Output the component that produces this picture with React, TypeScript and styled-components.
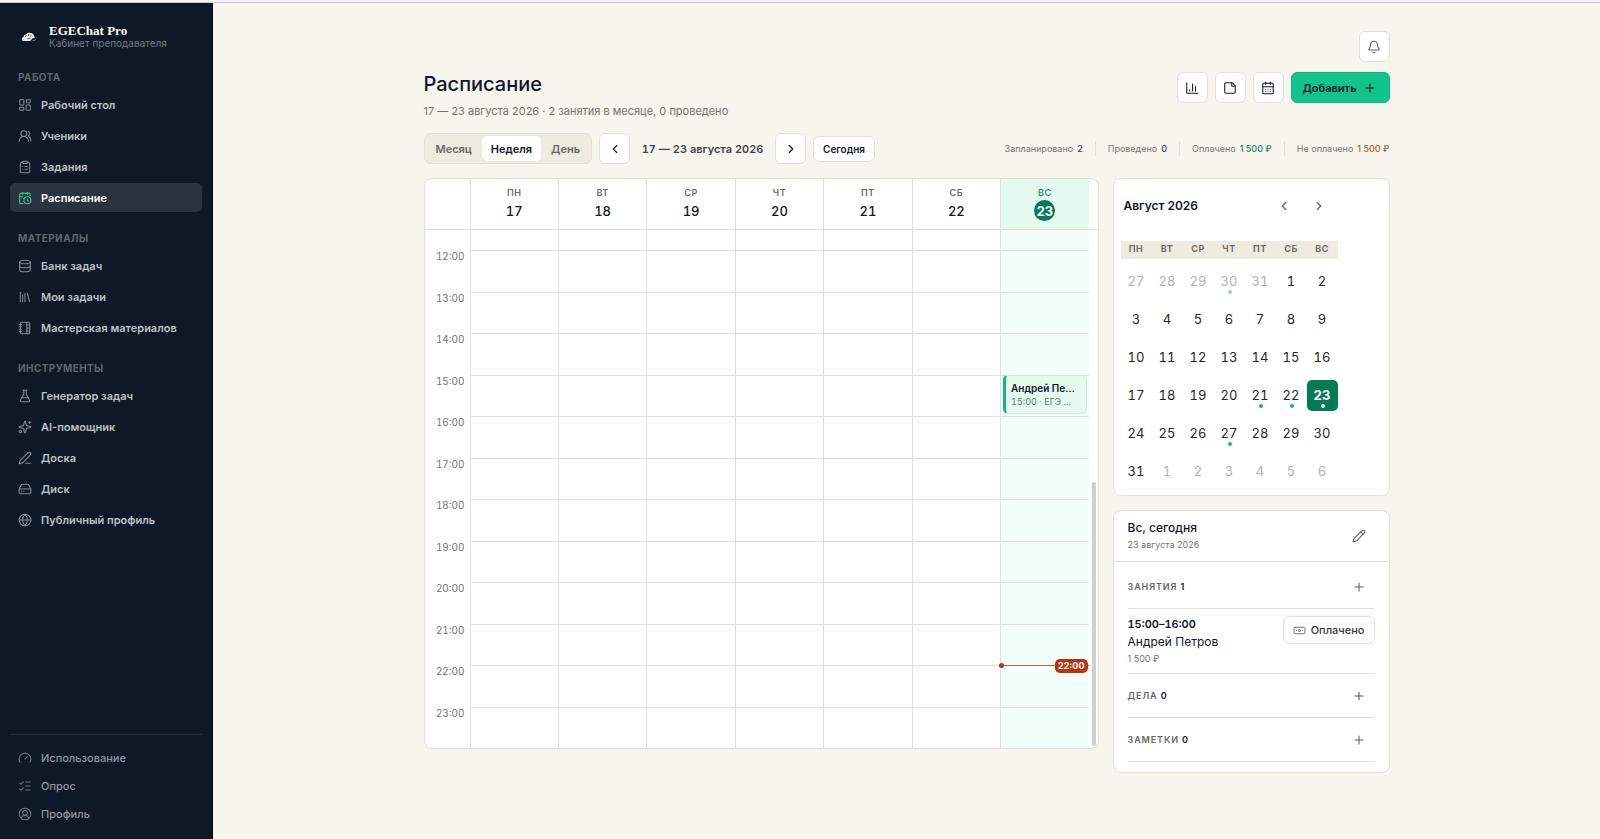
import React from "react";
import styled, { createGlobalStyle, css } from "styled-components";
import {
  Banknote,
  Bell,
  CalendarClock,
  CalendarDays,
  ChevronLeft,
  ChevronRight,
  CircleUserRound,
  ClipboardList,
  Database,
  FlaskConical,
  Gauge,
  Globe,
  HardDrive,
  LayoutDashboard,
  Library,
  ListChecks,
  NotebookTabs,
  PenLine,
  Pencil,
  Plus,
  Sparkles,
  StickyNote,
  UsersRound,
  type LucideIcon,
} from "lucide-react";

const color = {
  page: "#f6f5ee",
  card: "#ffffff",
  ink: "#10172a",
  soft: "#3f4450",
  muted: "#74746f",
  faint: "#b3b2ad",
  line: "#e2dfd8",
  sand: "#eeebe1",
  navy: "#0f1826",
  green: "#10b981",
  mint: "#10c48a",
  deep: "#047a55",
  red: "#b8330e",
};

const GlobalStyle = createGlobalStyle`
  *, *::before, *::after { box-sizing: border-box; }
  body {
    margin: 0;
    background: ${color.page};
    color: ${color.ink};
    font-family: Inter, "Liberation Sans", sans-serif;
    font-size: 11px;
    line-height: 14px;
  }
  button { font: inherit; color: inherit; cursor: pointer; }
  a { color: inherit; text-decoration: none; }
  h1, h2, h3, p, ul, dl, dd { margin: 0; padding: 0; }
  ul { list-style: none; }
  svg { display: block; flex: none; }
`;

const TopStrip = styled.div`
  height: 3px;
  background: #f5f5f7;
  border-bottom: 1px solid #cbcbcd;
`;

const Shell = styled.div`
  display: flex;
  min-height: calc(100vh - 3px);
`;

/* Sidebar */

const Sidebar = styled.aside`
  display: flex;
  flex-direction: column;
  flex: none;
  width: 213px;
  padding: 21px 10px 11px 10px;
  background: ${color.navy};
  border-right: 1px solid #000;
`;

const Brand = styled.a`
  display: flex;
  align-items: center;
  gap: 12px;
  padding-left: 11px;
  margin-bottom: 22px;
`;

const BrandName = styled.strong`
  display: block;
  font: bold 13px/13px "Liberation Serif", serif;
  color: #fff;
`;

const BrandRole = styled.span`
  display: block;
  font-size: 10px;
  line-height: 12px;
  color: #747a84;
`;

const Nav = styled.nav`
  display: flex;
  flex-direction: column;
  gap: 20px;
`;

const GroupTitle = styled.h2`
  margin-bottom: 7px;
  padding-left: 8px;
  font-size: 10px;
  font-weight: 700;
  line-height: 12px;
  letter-spacing: 0.04em;
  color: #5f6671;
`;

const NavList = styled.ul`
  display: grid;
  gap: 2px;
`;

const NavLink = styled.a<{ $active?: boolean }>`
  display: flex;
  align-items: center;
  gap: 9px;
  height: 29px;
  padding: 0 8px;
  border-radius: 5px;
  font-weight: 600;
  color: #bdc1c7;
  svg { color: #858b95; }
  ${(p) =>
    p.$active &&
    css`
      background: #2b3340;
      color: #fff;
      svg { color: #34d399; }
    `}
`;

const SidebarFooter = styled.nav`
  margin-top: auto;
  padding-top: 9px;
  border-top: 1px solid #222b38;
`;

const FooterLink = styled(NavLink)`
  height: 28px;
  font-weight: 500;
  color: #9196a0;
  svg { color: #6f7681; }
`;

/* Page */

const Main = styled.main`
  flex: 1;
  min-width: 0;
  padding: 28px 24px;
`;

const Content = styled.div`
  max-width: 966px;
  margin: 0 auto;
`;

const Row = styled.div<{ $end?: boolean }>`
  display: flex;
  align-items: center;
  gap: 7px;
  justify-content: ${(p) => (p.$end ? "flex-end" : "flex-start")};
`;

const IconButton = styled.button<{ $plain?: boolean; $muted?: boolean }>`
  display: grid;
  place-items: center;
  width: 31px;
  height: 31px;
  padding: 0;
  border: 1px solid ${(p) => (p.$plain ? "transparent" : color.line)};
  border-radius: 6px;
  background: ${(p) => (p.$plain ? "transparent" : color.card)};
  color: ${(p) => (p.$muted ? "#5d5e5d" : color.ink)};
`;

const PageHead = styled.header`
  display: flex;
  justify-content: space-between;
  align-items: flex-start;
  margin: 10px 0 15px;
`;

const Title = styled.h1`
  font-size: 20px;
  font-weight: 500;
  line-height: 24px;
`;

const Subtitle = styled.p`
  margin-top: 8px;
  color: ${color.muted};
`;

const AddButton = styled.button`
  display: flex;
  align-items: center;
  gap: 6px;
  height: 31px;
  padding: 0 12px 0 11px;
  border: 1px solid #12b47f;
  border-radius: 6px;
  background: ${color.mint};
  font-weight: 600;
`;

const Toolbar = styled.div`
  display: flex;
  align-items: center;
  justify-content: space-between;
  margin-bottom: 14px;
`;

const Segmented = styled.div`
  display: flex;
  gap: 1px;
  height: 31px;
  padding: 2px;
  border: 1px solid ${color.line};
  border-radius: 7px;
  background: ${color.sand};
`;

const Segment = styled.button<{ $on?: boolean }>`
  padding: 0 9px;
  border: 0;
  border-radius: 5px;
  background: ${(p) => (p.$on ? color.card : "transparent")};
  color: ${(p) => (p.$on ? color.ink : "#686967")};
  font-weight: 600;
`;

const RangeLabel = styled.span`
  min-width: 131px;
  text-align: center;
  font-weight: 600;
  font-variant-numeric: tabular-nums;
  color: ${color.soft};
`;

const TodayButton = styled.button`
  height: 26px;
  padding: 0 9px;
  border: 1px solid ${color.line};
  border-radius: 6px;
  background: ${color.card};
  font-size: 10px;
  font-weight: 600;
`;

const Stats = styled.dl`
  display: flex;
  font-size: 9px;
  line-height: 15px;
`;

const Stat = styled.div<{ $tone: string }>`
  display: flex;
  gap: 4px;
  padding: 0 12px;
  border-left: 1px solid ${color.line};
  color: ${color.muted};
  &:first-child { border-left: 0; }
  &:last-child { padding-right: 0; }
  dd { color: ${(p) => p.$tone}; font-weight: 500; }
`;

const Columns = styled.div`
  display: grid;
  grid-template-columns: minmax(0, 1fr) 277px;
  align-items: start;
  gap: 14px;
`;

const Card = styled.section`
  border: 1px solid ${color.line};
  border-radius: 8px;
  background: ${color.card};
  overflow: hidden;
`;

/* Week grid */

const weekColumns = css`
  display: grid;
  grid-template-columns: 45px repeat(7, minmax(0, 1fr)) 9px;
`;

const WeekHead = styled.div`
  ${weekColumns}
  border-bottom: 1px solid ${color.line};
`;

const DayHead = styled.div<{ $today?: boolean }>`
  display: flex;
  flex-direction: column;
  align-items: center;
  height: 50px;
  padding-top: 7px;
  border-left: 1px solid ${color.line};
  background: ${(p) => (p.$today ? "#e4faf0" : "transparent")};
`;

const DayName = styled.span<{ $today?: boolean }>`
  font-size: 9px;
  font-weight: 600;
  line-height: 13px;
  letter-spacing: 0.06em;
  color: ${(p) => (p.$today ? "#2f8f6c" : "#6a6b6c")};
`;

const DayNumber = styled.span<{ $today?: boolean }>`
  display: grid;
  place-items: center;
  width: 21px;
  height: 21px;
  margin-top: 1px;
  border-radius: 50%;
  font-size: 13px;
  font-weight: 500;
  font-variant-numeric: tabular-nums;
  ${(p) => p.$today && css`background: ${color.deep}; color: #fff; font-weight: 700;`}
`;

const WeekBody = styled.div`
  ${weekColumns}
  position: relative;
  height: 518px;
`;

const hourRows = css`
  display: grid;
  grid-template-rows: 20px repeat(12, minmax(0, 1fr));
`;

const HourLabels = styled.div`
  ${hourRows}
`;

const HourLabel = styled.time`
  padding-right: 5px;
  text-align: right;
  font-size: 10px;
  line-height: 12px;
  color: ${color.muted};
  font-variant-numeric: tabular-nums;
`;

const DayColumn = styled.div<{ $today?: boolean }>`
  ${hourRows}
  border-left: 1px solid ${color.line};
  background: ${(p) => (p.$today ? "#f2fefa" : "transparent")};
`;

const HourCell = styled.div`
  position: relative;
  border-top: 1px solid ${color.line};
  &:first-child { border-top: 0; }
`;

const EventCard = styled.a`
  position: absolute;
  inset: -1px 2px 2px;
  padding: 5px 6px 0 5px;
  border: 1px solid #cfeadd;
  border-left: 3px solid ${color.green};
  border-radius: 5px;
  background: #e5f9ef;
  font-size: 10px;
  line-height: 14px;
  white-space: nowrap;
  strong, span { display: block; }
  strong { font-weight: 600; }
  span { color: #5f7a70; font-size: 9px; font-variant-numeric: tabular-nums; }
`;

const NowLine = styled.div`
  position: absolute;
  inset: -1px 0 auto -2px;
  display: flex;
  align-items: center;
  justify-content: flex-end;
  height: 1px;
  padding-right: 1px;
  background: #b46353;
  &::before {
    content: "";
    position: absolute;
    left: 0;
    width: 5px;
    height: 5px;
    border-radius: 50%;
    background: ${color.red};
  }
`;

const NowBadge = styled.time`
  padding: 0 3px;
  border-radius: 5px;
  background: ${color.red};
  color: #fff;
  font-size: 9px;
  font-weight: 700;
  line-height: 14px;
`;

const ScrollThumb = styled.div`
  position: absolute;
  right: 2px;
  bottom: 2px;
  width: 4px;
  height: 264px;
  border-radius: 2px;
  background: #cfcfcf;
`;

/* Side column */

const Side = styled.div`
  display: grid;
  gap: 14px;
`;

const MiniHead = styled.header`
  display: flex;
  align-items: center;
  width: 224px;
  height: 53px;
  padding: 0 3px 0 10px;
  h2 { margin-right: auto; font-size: 12px; font-weight: 600; }
  button + button { margin-left: 4px; }
`;

const MiniTable = styled.table`
  margin: 9px 7px 8px;
  border-collapse: collapse;
  th {
    width: 31px;
    height: 18px;
    padding: 0 0 2px;
    background: ${color.sand};
    font-size: 9px;
    font-weight: 700;
    letter-spacing: 0.06em;
    color: #6f6d66;
  }
  td { padding: 7px 0 0; }
`;

const DateButton = styled.button<{ $out?: boolean; $on?: boolean; $dot?: boolean }>`
  position: relative;
  display: block;
  width: 31px;
  height: 31px;
  padding: 0 0 1px;
  border: 0;
  border-radius: 5px;
  background: ${(p) => (p.$on ? color.deep : "transparent")};
  color: ${(p) => (p.$on ? "#fff" : p.$out ? color.faint : "#23262d")};
  font-size: 13px;
  font-weight: ${(p) => (p.$on ? 700 : 400)};
  font-variant-numeric: tabular-nums;
  ${(p) =>
    p.$dot &&
    css`
      &::after {
        content: "";
        position: absolute;
        left: 14px;
        bottom: 3px;
        width: 4px;
        height: 4px;
        border-radius: 50%;
        background: ${p.$on ? "#fff" : color.green};
        opacity: ${p.$out ? 0.5 : 1};
      }
    `}
`;

const DayPanelHead = styled.header`
  display: flex;
  align-items: center;
  justify-content: space-between;
  height: 51px;
  padding: 0 14px;
  border-bottom: 1px solid ${color.line};
  h2 { font-size: 12px; font-weight: 500; line-height: 17px; }
  p { font-size: 9px; line-height: 17px; color: ${color.muted}; }
`;

const DayPanelBody = styled.div`
  padding: 3px 14px 10px;
`;

const SectionHead = styled.div`
  display: flex;
  align-items: center;
  justify-content: space-between;
  height: 44px;
  border-bottom: 1px solid ${color.line};
  h3 {
    font-size: 9px;
    font-weight: 600;
    letter-spacing: 0.1em;
    color: #666765;
  }
  b { font-weight: 600; color: ${color.ink}; }
`;

const Lesson = styled.article`
  display: flex;
  justify-content: space-between;
  align-items: flex-start;
  padding: 7px 0 5px;
  border-bottom: 1px solid ${color.line};
`;

const LessonInfo = styled.div`
  line-height: 17px;
  strong {
    display: block;
    font-weight: 600;
    font-variant-numeric: tabular-nums;
  }
  a { display: block; font-size: 12px; }
  small { display: block; font-size: 9px; color: ${color.muted}; line-height: 18px; }
`;

const PaidButton = styled.button`
  display: flex;
  align-items: center;
  gap: 5px;
  height: 28px;
  padding: 0 9px;
  border: 1px solid ${color.line};
  border-radius: 6px;
  background: ${color.card};
  font-weight: 500;
  color: #33363d;
  svg { color: #6c6d6c; }
`;

type Item = { label: string; icon: LucideIcon; active?: boolean };

const groups: { title: string; items: Item[] }[] = [
  {
    title: "РАБОТА",
    items: [
      { label: "Рабочий стол", icon: LayoutDashboard },
      { label: "Ученики", icon: UsersRound },
      { label: "Задания", icon: ClipboardList },
      { label: "Расписание", icon: CalendarClock, active: true },
    ],
  },
  {
    title: "МАТЕРИАЛЫ",
    items: [
      { label: "Банк задач", icon: Database },
      { label: "Мои задачи", icon: Library },
      { label: "Мастерская материалов", icon: NotebookTabs },
    ],
  },
  {
    title: "ИНСТРУМЕНТЫ",
    items: [
      { label: "Генератор задач", icon: FlaskConical },
      { label: "AI-помощник", icon: Sparkles },
      { label: "Доска", icon: PenLine },
      { label: "Диск", icon: HardDrive },
      { label: "Публичный профиль", icon: Globe },
    ],
  },
];

const footerItems: Item[] = [
  { label: "Использование", icon: Gauge },
  { label: "Опрос", icon: ListChecks },
  { label: "Профиль", icon: CircleUserRound },
];

const stats = [
  { label: "Запланировано", value: "2", tone: color.soft },
  { label: "Проведено", value: "0", tone: color.soft },
  { label: "Оплачено", value: "1 500 ₽", tone: "#1d8361" },
  { label: "Не оплачено", value: "1 500 ₽", tone: "#a0652a" },
];

const weekdays = ["ПН", "ВТ", "СР", "ЧТ", "ПТ", "СБ", "ВС"];
const hours = Array.from({ length: 12 }, (_, i) => 12 + i);
const TODAY = 23;

// Six weeks that begin on 27 July; offset 0 is 1 August.
const monthWeeks = Array.from({ length: 6 }, (_, w) =>
  Array.from({ length: 7 }, (_, d) => {
    const offset = w * 7 + d - 5;
    const out = offset < 0 || offset > 30;
    const day = offset < 0 ? 32 + offset : offset > 30 ? offset - 30 : offset + 1;
    const dot = out ? day === 30 : [21, 22, 23, 27].includes(day);
    return { day, out, dot };
  })
);

function BrandMark() {
  return (
    <svg width="16" height="11" viewBox="0 0 32 22" aria-hidden="true">
      <path
        d="M2 19c-1-4 0-6 3-7 0-3 2-5 5-5 2-3 5-4 8-3 4-1 8 2 8 6 1 1 2 3 1 4l-5 1-2 4-4 1H4z"
        fill="#e9ecf0"
      />
      <path d="M9 11l2-3M14 10l2-4M19 11l2-3M13 16l6-2" stroke="#0f1826" strokeWidth="1.4" fill="none" />
      <path d="M23 19h5l2-3" stroke="#7d8490" strokeWidth="1.6" fill="none" />
    </svg>
  );
}

function ChartIcon() {
  return (
    <svg width="14" height="14" viewBox="0 0 24 24" fill="none" stroke="currentColor" strokeWidth="1.8" strokeLinecap="round" strokeLinejoin="round" aria-hidden="true">
      <path d="M3 3v17a1 1 0 0 0 1 1h18M8 17v-2M13 17V5M18 17V9" />
    </svg>
  );
}

function NavItems({ items, as: Link = NavLink }: { items: Item[]; as?: typeof NavLink }) {
  return (
    <>
      {items.map(({ label, icon: Icon, active }) => (
        <li key={label}>
          <Link href="#" $active={active} aria-current={active ? "page" : undefined}>
            <Icon size={14} strokeWidth={1.8} />
            {label}
          </Link>
        </li>
      ))}
    </>
  );
}

function WeekGrid() {
  return (
    <Card aria-label="Неделя">
      <WeekHead>
        <span />
        {weekdays.map((name, i) => {
          const today = 17 + i === TODAY;
          return (
            <DayHead key={name} $today={today}>
              <DayName $today={today}>{name}</DayName>
              <DayNumber $today={today}>{17 + i}</DayNumber>
            </DayHead>
          );
        })}
      </WeekHead>
      <WeekBody>
        <HourLabels>
          <span />
          {hours.map((h) => (
            <HourLabel key={h}>{h}:00</HourLabel>
          ))}
        </HourLabels>
        {weekdays.map((name, i) => {
          const today = 17 + i === TODAY;
          return (
            <DayColumn key={name} $today={today}>
              <HourCell />
              {hours.map((h) => (
                <HourCell key={h}>
                  {today && h === 15 && (
                    <EventCard href="#">
                      <strong>Андрей Пе…</strong>
                      <span>15:00 · ЕГЭ …</span>
                    </EventCard>
                  )}
                  {today && h === 22 && (
                    <NowLine>
                      <NowBadge>22:00</NowBadge>
                    </NowLine>
                  )}
                </HourCell>
              ))}
            </DayColumn>
          );
        })}
        <ScrollThumb />
      </WeekBody>
    </Card>
  );
}

function MiniCalendar() {
  return (
    <Card>
      <MiniHead>
        <h2>Август 2026</h2>
        <IconButton $plain $muted aria-label="Предыдущий месяц"><ChevronLeft size={14} /></IconButton>
        <IconButton $plain $muted aria-label="Следующий месяц"><ChevronRight size={14} /></IconButton>
      </MiniHead>
      <MiniTable>
        <thead>
          <tr>{weekdays.map((d) => <th key={d} scope="col">{d}</th>)}</tr>
        </thead>
        <tbody>
          {monthWeeks.map((week, w) => (
            <tr key={w}>
              {week.map(({ day, out, dot }) => (
                <td key={day}>
                  <DateButton $out={out} $dot={dot} $on={!out && day === TODAY}>{day}</DateButton>
                </td>
              ))}
            </tr>
          ))}
        </tbody>
      </MiniTable>
    </Card>
  );
}

function PanelSection({ title, count }: { title: string; count: number }) {
  return (
    <SectionHead>
      <h3>{title} <b>{count}</b></h3>
      <IconButton $plain $muted aria-label={"Добавить: " + title}><Plus size={14} strokeWidth={1.8} /></IconButton>
    </SectionHead>
  );
}

function DayPanel() {
  return (
    <Card>
      <DayPanelHead>
        <div>
          <h2>Вс, сегодня</h2>
          <p>23 августа 2026</p>
        </div>
        <IconButton $plain $muted aria-label="Изменить"><Pencil size={14} strokeWidth={1.8} /></IconButton>
      </DayPanelHead>
      <DayPanelBody>
        <PanelSection title="ЗАНЯТИЯ" count={1} />
        <Lesson>
          <LessonInfo>
            <strong>15:00–16:00</strong>
            <a href="#">Андрей Петров</a>
            <small>1 500 ₽</small>
          </LessonInfo>
          <PaidButton><Banknote size={13} strokeWidth={1.8} />Оплачено</PaidButton>
        </Lesson>
        <PanelSection title="ДЕЛА" count={0} />
        <PanelSection title="ЗАМЕТКИ" count={0} />
      </DayPanelBody>
    </Card>
  );
}

export default function App() {
  return (
    <>
      <GlobalStyle />
      <TopStrip />
      <Shell>
        <Sidebar>
          <Brand href="#">
            <BrandMark />
            <span>
              <BrandName>EGEChat Pro</BrandName>
              <BrandRole>Кабинет преподавателя</BrandRole>
            </span>
          </Brand>
          <Nav>
            {groups.map((g) => (
              <div key={g.title}>
                <GroupTitle>{g.title}</GroupTitle>
                <NavList><NavItems items={g.items} /></NavList>
              </div>
            ))}
          </Nav>
          <SidebarFooter>
            <ul><NavItems items={footerItems} as={FooterLink as typeof NavLink} /></ul>
          </SidebarFooter>
        </Sidebar>
        <Main>
          <Content>
            <Row $end>
              <IconButton $muted aria-label="Уведомления"><Bell size={14} strokeWidth={1.8} /></IconButton>
            </Row>
            <PageHead>
              <div>
                <Title>Расписание</Title>
                <Subtitle>17 — 23 августа 2026 · 2 занятия в месяце, 0 проведено</Subtitle>
              </div>
              <Row>
                <IconButton aria-label="Статистика"><ChartIcon /></IconButton>
                <IconButton aria-label="Заметки"><StickyNote size={14} strokeWidth={1.8} /></IconButton>
                <IconButton aria-label="Календарь"><CalendarDays size={14} strokeWidth={1.8} /></IconButton>
                <AddButton>Добавить<Plus size={14} strokeWidth={1.8} /></AddButton>
              </Row>
            </PageHead>
            <Toolbar>
              <Row>
                <Segmented>
                  <Segment>Месяц</Segment>
                  <Segment $on>Неделя</Segment>
                  <Segment>День</Segment>
                </Segmented>
                <IconButton aria-label="Предыдущая неделя"><ChevronLeft size={14} /></IconButton>
                <RangeLabel>17 — 23 августа 2026</RangeLabel>
                <IconButton aria-label="Следующая неделя"><ChevronRight size={14} /></IconButton>
                <TodayButton>Сегодня</TodayButton>
              </Row>
              <Stats>
                {stats.map((s) => (
                  <Stat key={s.label} $tone={s.tone}>
                    <dt>{s.label}</dt>
                    <dd>{s.value}</dd>
                  </Stat>
                ))}
              </Stats>
            </Toolbar>
            <Columns>
              <WeekGrid />
              <Side>
                <MiniCalendar />
                <DayPanel />
              </Side>
            </Columns>
          </Content>
        </Main>
      </Shell>
    </>
  );
}
